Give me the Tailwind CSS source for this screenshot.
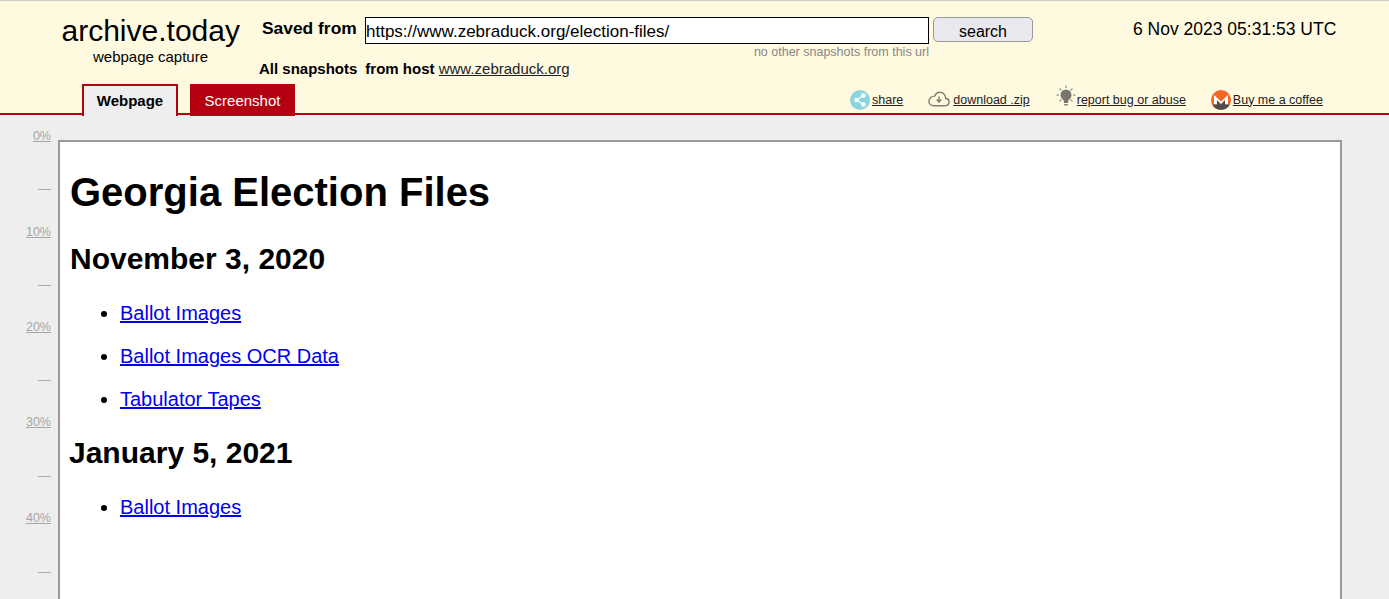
<!DOCTYPE html>
<html lang="en">
<head>
  <meta charset="UTF-8">
  <title>archive.today</title>
  <script src="https://cdn.jsdelivr.net/npm/@tailwindcss/browser@4"></script>
</head>
<body class="h-[599px] overflow-hidden bg-[#eeeeee] font-['Liberation_Sans',Arial,sans-serif] text-black">

  <!-- Header -->
  <div class="h-[115px] border-t border-b-2 border-t-[#cccccc] border-b-[#b40010] bg-[#fff9e0] flex flex-col">
    <div class="flex h-[83px] shrink-0">
      <div class="w-[259px] pl-[42px] pt-[14px] flex flex-col items-center">
        <div class="w-[178px] text-center text-[30px] leading-[32px] whitespace-nowrap">archive.today</div>
        <div class="w-[178px] text-center text-[15px] leading-[16px] mt-[2px]">webpage capture</div>
      </div>

      <div class="w-[774px] pt-[16px]">
        <div class="flex items-start">
          <div class="font-bold text-[17.4px] leading-[20px] pl-[3px] mt-[1px] w-[106px] whitespace-nowrap">Saved from</div>
          <div class="w-[564px] h-[27px] border border-black bg-white text-[17px] leading-[27px] whitespace-nowrap overflow-hidden">https://www.zebraduck.org/election-files/</div>
          <div class="ml-[4px] w-[100px] h-[25px] rounded-[5px] border border-[#999999] bg-[#e8e8ee] text-center text-[16px] leading-[27px]">search</div>
        </div>
        <div class="w-[670px] text-right text-[12.5px] leading-[14px] text-[#888888] mt-[1px]">no other snapshots from this url</div>
        <div class="text-[15px] leading-[18px] mt-[1px] whitespace-nowrap"><b>All snapshots</b><b class="ml-[8px]">from host</b> <span class="underline text-[#222222]">www.zebraduck.org</span></div>
      </div>

      <div class="ml-[100px] pt-[18px] text-[17.5px] leading-[20px] whitespace-nowrap">6 Nov 2023 05:31:53 UTC</div>
    </div>

    <div class="flex items-start">
      <div class="ml-[82px] w-[96px] h-[32px] shrink-0 border-2 border-b-0 border-[#b40010] bg-[#eeeeee] text-center font-bold text-[15px] leading-[29px]">Webpage</div>
      <div class="ml-[12px] w-[105px] h-[32px] shrink-0 bg-[#b40010] text-white text-center text-[15px] leading-[34px]">Screenshot</div>

      <div class="ml-[555px] flex items-center h-[32px] text-[12.5px] underline text-[#222222] whitespace-nowrap">
        <svg class="w-[20px] h-[20px] mr-[2px]" viewBox="0 0 20 20">
          <circle cx="10" cy="10" r="10" fill="#8ad6de"/>
          <path d="M13.5 5.5 L6.5 10 L13.5 14.5" stroke="#fff" stroke-width="1.3" fill="none"/>
          <circle cx="13.5" cy="5.5" r="2.3" fill="#fff"/>
          <circle cx="6.5" cy="10" r="2.3" fill="#fff"/>
          <circle cx="13.5" cy="14.5" r="2.3" fill="#fff"/>
        </svg>
        <span>share</span>
        <svg class="ml-[25px] w-[22px] h-[16px] mr-[3px] -mt-[2px]" viewBox="0 0 23 16">
          <path d="M6 15 H18 C21 15 22 13 22 11 C22 9 20.5 7.5 18.5 7.5 C18.5 3.5 15.5 1 12.5 1 C10 1 8 2.5 7 5 C3.5 5 1 7.5 1 10.5 C1 13 3 15 6 15 Z" fill="none" stroke="#7d7d72" stroke-width="1.5"/>
          <path d="M11.5 5.5 V10.5 M9 8.5 L11.5 11 L14 8.5" fill="none" stroke="#7d7d72" stroke-width="1.5"/>
        </svg>
        <span>download .zip</span>
        <svg class="ml-[25px] w-[22px] h-[22px] -mt-[9px]" viewBox="0 0 22 22">
          <circle cx="11" cy="10" r="5.5" fill="#777770"/>
          <path d="M8.5 13 h5 l-0.5 5 h-4 Z" fill="#777770"/>
          <path d="M9 19 h4 v1.5 h-4 Z" fill="#8a8a80"/>
          <path d="M11 0.5 v2.5 M4.5 3.5 l2 2 M17.5 3.5 l-2 2 M1.5 10 h2.5 M18 10 h2.5 M4.5 16.5 l2 -2 M17.5 16.5 l-2 -2" stroke="#a0a096" stroke-width="1.4"/>
        </svg>
        <span>report bug or abuse</span>
        <svg class="ml-[25px] w-[20px] h-[20px] mr-[2px]" viewBox="0 0 20 20">
          <circle cx="10" cy="10" r="10" fill="#f26822"/>
          <path d="M3 14.5 V5 L10 11.5 L17 5 V14.5 H14 V10 L10 14 L6 10 V14.5 Z" fill="#ffffff"/>
          <path d="M1.2 14.5 H6 V10.5 L10 14.5 L14 10.5 V14.5 H18.8 A10 10 0 0 1 1.2 14.5 Z" fill="#4d4d4d"/>
        </svg>
        <span>Buy me a coffee</span>
      </div>
    </div>
  </div>

  <!-- Ruler and page frame -->
  <div class="flex items-start">
    <div class="w-[51px] shrink-0 pt-[14px] text-right text-[12.5px] leading-[14px] text-[#a6a6a6]">
      <div class="h-[48px] underline">0%</div>
      <div class="h-[48px] pt-[5px]"><span class="inline-block w-[13px] h-px bg-[#aaaaaa] align-middle"></span></div>
      <div class="h-[48px] underline">10%</div>
      <div class="h-[47px] pt-[5px]"><span class="inline-block w-[13px] h-px bg-[#aaaaaa] align-middle"></span></div>
      <div class="h-[48px] underline">20%</div>
      <div class="h-[47px] pt-[5px]"><span class="inline-block w-[13px] h-px bg-[#aaaaaa] align-middle"></span></div>
      <div class="h-[48px] underline">30%</div>
      <div class="h-[48px] pt-[6px]"><span class="inline-block w-[13px] h-px bg-[#aaaaaa] align-middle"></span></div>
      <div class="h-[48px] underline">40%</div>
      <div class="h-[48px] pt-[6px]"><span class="inline-block w-[13px] h-px bg-[#aaaaaa] align-middle"></span></div>
    </div>

    <div class="ml-[7px] mt-[25px] w-[1284px] h-[460px] shrink-0 border-2 border-b-0 border-[#999999] bg-white pl-[10px] pt-[27px]">
      <h1 class="font-bold text-[40px] leading-[46px]">Georgia Election Files</h1>
      <h2 class="font-bold text-[30px] leading-[34px] mt-[27px]">November 3, 2020</h2>
      <ul class="list-disc pl-[50px] mt-[26px] text-[20px] leading-[23px] text-[#0000ee]">
        <li class="marker:text-black"><a class="underline" href="#">Ballot Images</a></li>
        <li class="marker:text-black mt-[20px]"><a class="underline" href="#">Ballot Images OCR Data</a></li>
        <li class="marker:text-black mt-[20px]"><a class="underline" href="#">Tabulator Tapes</a></li>
      </ul>
      <h2 class="font-bold text-[30px] leading-[34px] mt-[25px] -ml-px">January 5, 2021</h2>
      <ul class="list-disc pl-[50px] mt-[26px] text-[20px] leading-[23px] text-[#0000ee]">
        <li class="marker:text-black"><a class="underline" href="#">Ballot Images</a></li>
      </ul>
    </div>
  </div>
</body>
</html>
